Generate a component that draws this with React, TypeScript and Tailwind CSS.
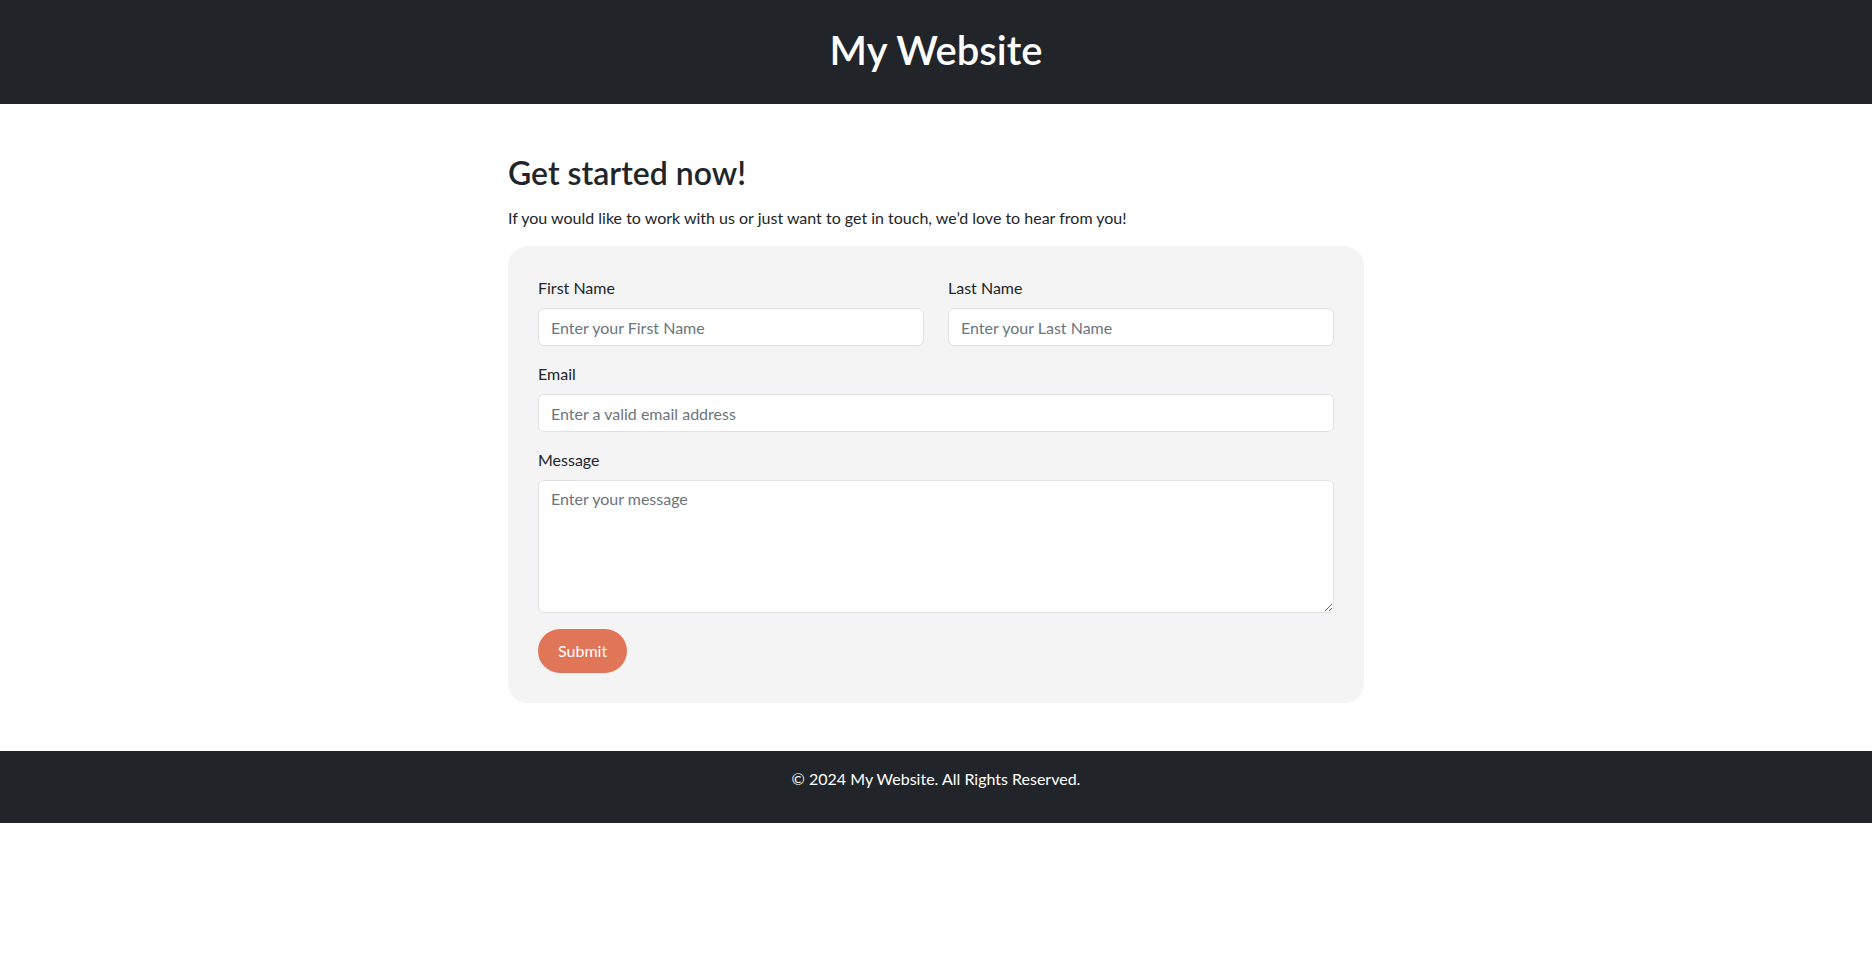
import React from 'react';

const font = { fontFamily: '"Segoe UI", Lato, "Noto Sans", sans-serif' };

const Field: React.FC<{ label: string; placeholder: string; type?: string }> = ({ label, placeholder, type = 'text' }) => (
  <div className="flex flex-col">
    <label className="mb-2 text-base leading-6 text-[#212529]">{label}</label>
    <input
      type={type}
      placeholder={placeholder}
      className="h-[38px] w-full rounded-[6px] border border-[#dee2e6] bg-white px-3 text-base text-[#212529] placeholder:text-[#6c757d] outline-none"
    />
  </div>
);

export default function App() {
  return (
    <div className="min-h-screen bg-white text-[#212529]" style={font}>
      <header className="bg-[#212529] pt-[26px] pb-[30px] text-center">
        <h1 className="text-[40px] leading-[48px] font-semibold text-white">My Website</h1>
      </header>

      <main className="mx-auto mt-12 mb-12 w-[856px]">
        <h2 className="mb-[14px] pt-[2px] text-[32px] leading-[38px] font-semibold">Get started now!</h2>
        <p className="mb-4 text-base leading-6">
          If you would like to work with us or just want to get in touch, we’d love to hear from you!
        </p>

        <form className="rounded-[20px] bg-[#f4f4f4] p-[30px]" onSubmit={(e) => e.preventDefault()}>
          <div className="grid grid-cols-2 gap-6">
            <Field label="First Name" placeholder="Enter your First Name" />
            <Field label="Last Name" placeholder="Enter your Last Name" />
          </div>
          <div className="mt-4">
            <Field label="Email" placeholder="Enter a valid email address" type="email" />
          </div>
          <div className="mt-4 flex flex-col">
            <label className="mb-2 text-base leading-6">Message</label>
            <textarea
              rows={5}
              placeholder="Enter your message"
              className="h-[133px] w-full rounded-[6px] border border-[#dee2e6] bg-white px-3 py-1.5 text-base leading-6 placeholder:text-[#6c757d] outline-none"
            />
          </div>
          <button
            type="submit"
            className="mt-4 h-[44px] rounded-full bg-[#e07558] px-5 text-base text-white"
          >
            Submit
          </button>
        </form>
      </main>

      <footer className="bg-[#212529] pt-4 pb-8 text-center text-base leading-6 text-white">
        © 2024 My Website. All Rights Reserved.
      </footer>
    </div>
  );
}
